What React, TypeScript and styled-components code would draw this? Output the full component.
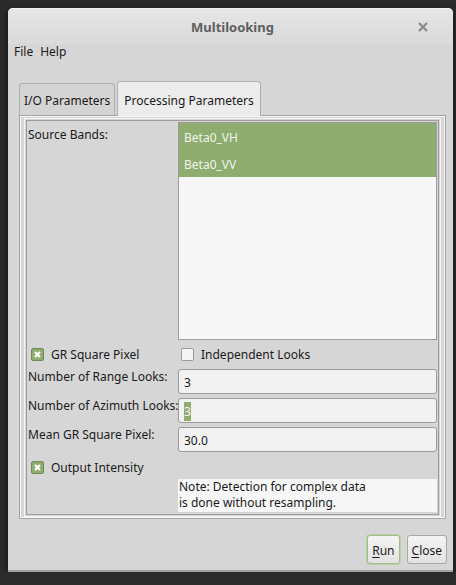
import React from 'react';
import styled, { createGlobalStyle } from 'styled-components';

const GlobalStyle = createGlobalStyle`
  html, body {
    margin: 0;
    padding: 0;
    background: #2b2b2b;
  }
  body {
    padding: 8px 3px 0 8px;
    font-family: 'Noto Sans', 'Open Sans', sans-serif;
    font-size: 12px;
    color: #1a1a1a;
  }
`;

const Window = styled.div`
  width: 445px;
  height: 564px;
  background: #d6d6d6;
  border-radius: 5px 5px 0 0;
  border-bottom: 2px solid #a2a2a2;
  box-sizing: border-box;
  display: flex;
  flex-direction: column;
  box-shadow: 0 2px 6px rgba(0, 0, 0, 0.6);
`;

const TitleBar = styled.div`
  height: 36px;
  flex: none;
  display: flex;
  align-items: center;
  justify-content: center;
  position: relative;
  background: linear-gradient(#e6e6e6, #dadada);
  border-radius: 5px 5px 0 0;
  border-top: 1px solid #f4f4f4;
  box-sizing: border-box;
`;

const Title = styled.span`
  font-weight: bold;
  font-size: 13px;
  color: #5f5f5f;
  padding-top: 1px;
  margin-left: 4px;
`;

const CloseX = styled.span`
  position: absolute;
  right: 24px;
  top: 11px;
  width: 12px;
  height: 12px;
`;

const MenuBar = styled.div`
  display: flex;
  gap: 7px;
  padding: 0 6px;
  height: 15px;
  align-items: center;
  flex: none;
`;

const Body = styled.div`
  padding: 22px 7px 0 11px;
  display: flex;
  flex-direction: column;
`;

const TabStrip = styled.div`
  display: flex;
  align-items: flex-end;
  gap: 2px;
  height: 34px;
`;

const Tab = styled.div<{ $active?: boolean }>`
  height: ${p => (p.$active ? 35 : 32)}px;
  box-sizing: border-box;
  padding: ${p => (p.$active ? '2px 6px 0 6px' : '2px 4px 0 4px')};
  display: flex;
  align-items: center;
  background: ${p => (p.$active ? '#ececec' : '#d4d4d4')};
  border: 1px solid #b0b0b0;
  border-bottom: none;
  border-radius: 3px 3px 0 0;
  margin-bottom: ${p => (p.$active ? '-1px' : '0')};
  position: relative;
  z-index: ${p => (p.$active ? 1 : 0)};
  color: #1a1a1a;
`;

const Panel = styled.div`
  width: 427px;
  height: 404px;
  box-sizing: border-box;
  border: 1px solid #a4a4a4;
  box-shadow: inset 0 0 0 1px #f6f6f6;
  padding: 4px 6px 3px 6px;
  background: #d6d6d6;
`;

const Inner = styled.div`
  height: 100%;
  box-sizing: border-box;
  border: 1px solid #9c9c9c;
  outline: 1px solid #f4f4f4;
  outline-offset: 1px;
  display: grid;
  grid-template-columns: 150px 259px;
  grid-auto-rows: min-content;
  padding: 1px 0 0 1px;
`;

const Label = styled.div<{ $top?: number }>`
  padding-top: ${p => p.$top ?? 0}px;
  line-height: 16px;
  white-space: nowrap;
`;

const List = styled.div`
  height: 218px;
  box-sizing: border-box;
  border: 1px solid #9c9c9c;
  background: #f7f7f7;
  display: flex;
  flex-direction: column;
`;

const ListItem = styled.div`
  height: 27px;
  flex: none;
  background: #8fad6e;
  color: #eef4f0;
  padding-left: 5px;
  display: flex;
  align-items: center;
  padding-top: 2px;
  box-sizing: border-box;
`;

const CheckRow = styled.label<{ $mt: number; $mb: number }>`
  display: flex;
  align-items: center;
  gap: 7px;
  height: 18px;
  margin: ${p => p.$mt}px 0 ${p => p.$mb}px 0;
  padding-left: 3px;
`;

const Box = styled.span<{ $checked?: boolean }>`
  width: 13px;
  height: 13px;
  box-sizing: border-box;
  border-radius: 2px;
  border: 1px solid ${p => (p.$checked ? '#6f8c57' : '#9a9a9a')};
  background: ${p => (p.$checked ? '#8fad6e' : '#f5f5f5')};
  display: flex;
  align-items: center;
  justify-content: center;
`;

const Field = styled.div`
  height: 25px;
  box-sizing: border-box;
  border: 1px solid #9a9a9a;
  border-radius: 3px;
  background: #f2f2f2;
  display: flex;
  align-items: center;
  padding: 2px 0 0 5px;
  margin-bottom: 4px;
`;

const Selected = styled.span`
  background: #8fad6e;
  color: #f4f4f4;
  padding: 1px 0;
`;

const Note = styled.div`
  background: #f6f6f6;
  line-height: 16px;
  padding: 0 0 0 1px;
  height: 33px;
`;

const Footer = styled.div`
  display: flex;
  justify-content: flex-end;
  gap: 7px;
  padding: 16px 6px 0 0;
`;

const Button = styled.div<{ $focus?: boolean }>`
  height: 29px;
  box-sizing: border-box;
  padding: 2px 4px 0 4px;
  display: flex;
  align-items: center;
  border: 1px solid ${p => (p.$focus ? '#9fbd86' : '#a8a8a8')};
  box-shadow: ${p => (p.$focus ? '0 0 0 1px #b9d1a6' : 'none')};
  border-radius: 3px;
  background: linear-gradient(#f4f4f4, #e2e2e2);
  u {
    text-decoration: underline;
    text-underline-offset: 2px;
  }
`;

const Tick = () => (
  <svg width="9" height="9" viewBox="0 0 9 9">
    <path d="M2 2 L7 7 M7 2 L2 7" stroke="#ffffff" strokeWidth="2.2" />
  </svg>
);

export default function App() {
  return (
    <>
      <GlobalStyle />
      <Window>
        <TitleBar>
          <Title>Multilooking</Title>
          <CloseX>
            <svg width="12" height="12" viewBox="0 0 12 12">
              <path d="M2 2 L10 10 M10 2 L2 10" stroke="#8c8c8c" strokeWidth="2.4" />
            </svg>
          </CloseX>
        </TitleBar>
        <MenuBar>
          <span>File</span>
          <span>Help</span>
        </MenuBar>
        <Body>
          <TabStrip>
            <Tab>I/O Parameters</Tab>
            <Tab $active>Processing Parameters</Tab>
          </TabStrip>
          <Panel>
            <Inner>
              <Label $top={5}>Source Bands:</Label>
              <List>
                <ListItem>Beta0_VH</ListItem>
                <ListItem>Beta0_VV</ListItem>
              </List>

              <CheckRow $mt={5} $mb={6}>
                <Box $checked>
                  <Tick />
                </Box>
                GR Square Pixel
              </CheckRow>
              <CheckRow $mt={5} $mb={6}>
                <Box />
                Independent Looks
              </CheckRow>

              <Label>Number of Range Looks:</Label>
              <Field>3</Field>

              <Label>Number of Azimuth Looks:</Label>
              <Field>
                <Selected>3</Selected>
              </Field>

              <Label>Mean GR Square Pixel:</Label>
              <Field>30.0</Field>

              <CheckRow $mt={2} $mb={3}>
                <Box $checked>
                  <Tick />
                </Box>
                Output Intensity
              </CheckRow>
              <div />

              <div />
              <Note>
                Note: Detection for complex data
                <br />
                is done without resampling.
              </Note>
            </Inner>
          </Panel>
        </Body>
        <Footer>
          <Button $focus>
            <u>R</u>un
          </Button>
          <Button>
            <u>C</u>lose
          </Button>
        </Footer>
      </Window>
    </>
  );
}
